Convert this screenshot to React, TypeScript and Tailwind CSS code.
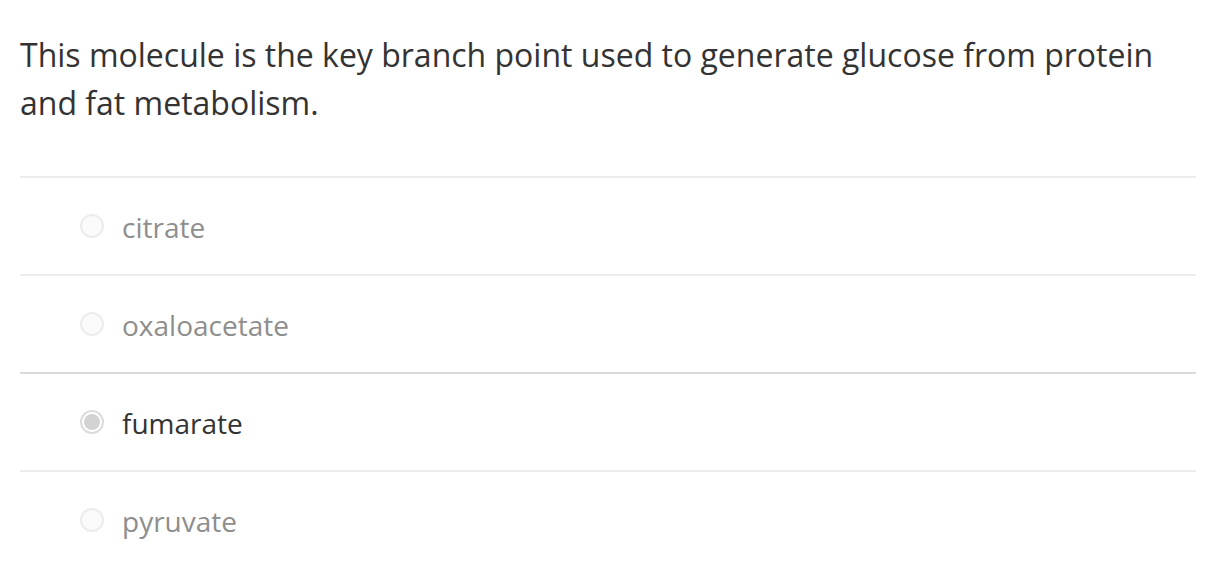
const OPTIONS = [
  { label: 'citrate', selected: false },
  { label: 'oxaloacetate', selected: false },
  { label: 'fumarate', selected: true },
  { label: 'pyruvate', selected: false },
];

function Radio({ selected }: { selected: boolean }) {
  if (selected) {
    return (
      <span className="flex h-[24px] w-[24px] shrink-0 items-center justify-center rounded-full border-2 border-[#dcdcdc] bg-white">
        <span className="h-[16px] w-[16px] rounded-full bg-[#d2d2d2]" />
      </span>
    );
  }
  return <span className="h-[24px] w-[24px] shrink-0 rounded-full border-2 border-[#ececec] bg-[#fafafa]" />;
}

export default function App() {
  return (
    <div className="min-h-screen bg-white pl-[20px] pr-[14px] pt-[31px] font-['Open_Sans',sans-serif]">
      <h1 className="text-[32px] leading-[48px] font-normal text-[#333333]">
        This molecule is the key branch point used to generate glucose from protein and fat metabolism.
      </h1>

      <ul className="mt-[49px]">
        {OPTIONS.map((opt, i) => (
          <li
            key={opt.label}
            className={`flex h-[98px] items-center gap-[18px] border-t-2 pl-[60px] ${
              i === 2 ? 'border-[#dadada]' : 'border-[#ececec]'
            }`}
          >
            <Radio selected={opt.selected} />
            <span className={`pt-[2px] text-[28px] leading-none ${opt.selected ? 'text-[#333333]' : 'text-[#8e8e8e]'}`}>
              {opt.label}
            </span>
          </li>
        ))}
      </ul>
    </div>
  );
}
